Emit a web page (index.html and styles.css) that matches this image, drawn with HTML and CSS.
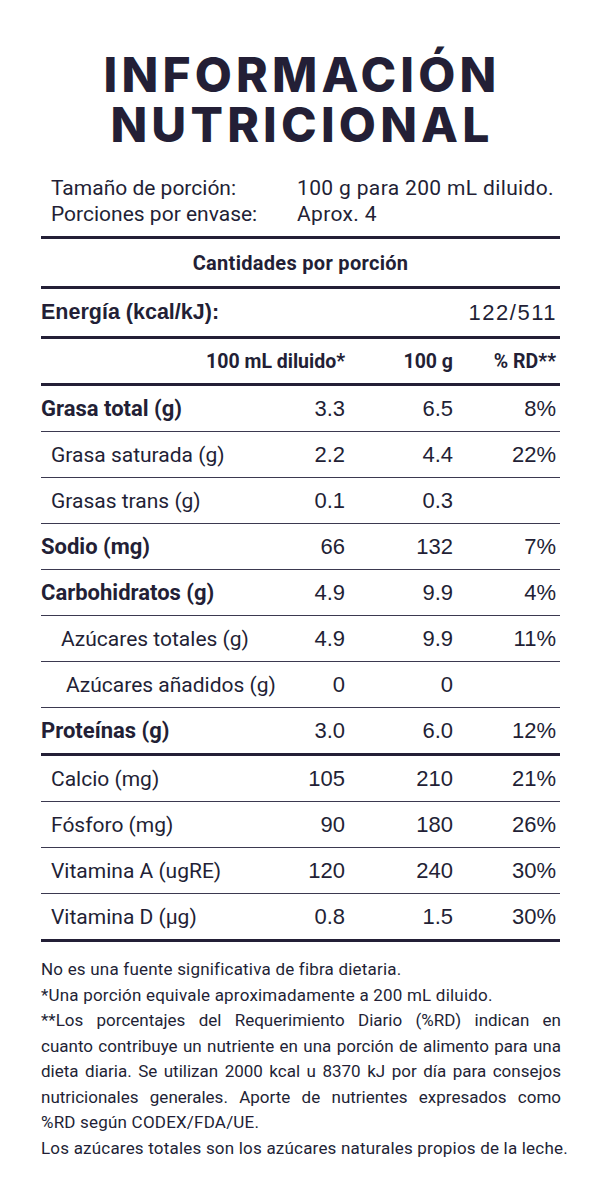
FILE: index.html
```html
<!DOCTYPE html>
<html lang="es">
<head>
<meta charset="utf-8">
<title>Información nutricional</title>
<link rel="stylesheet" href="styles.css">
</head>
<body>
<main class="label">
  <h1 class="title"><span class="title-line">INFORMACIÓN</span><span class="title-line">NUTRICIONAL</span></h1>

  <div class="serving">
    <span class="serving-key">Tamaño de porción:</span><span class="serving-val">100 g para 200 mL diluido.</span>
    <span class="serving-key">Porciones por envase:</span><span class="serving-val">Aprox. 4</span>
  </div>

  <div class="panel">
    <div class="band band-center">Cantidades por porción</div>
    <div class="band band-energy"><span class="energy-key">Energía (kcal/kJ):</span><span class="energy-val">122/511</span></div>

    <div class="row row-head">
      <span class="head-first">100 mL diluido*</span><span>100 g</span><span>% RD**</span>
    </div>

    <div class="group">
      <div class="row row-data"><span class="name strong">Grasa total (g)</span><span>3.3</span><span>6.5</span><span>8%</span></div>
      <div class="row row-data"><span class="name ind1">Grasa saturada (g)</span><span>2.2</span><span>4.4</span><span>22%</span></div>
      <div class="row row-data"><span class="name ind1">Grasas trans (g)</span><span>0.1</span><span>0.3</span><span></span></div>
      <div class="row row-data"><span class="name strong">Sodio (mg)</span><span>66</span><span>132</span><span>7%</span></div>
      <div class="row row-data"><span class="name strong">Carbohidratos (g)</span><span>4.9</span><span>9.9</span><span>4%</span></div>
      <div class="row row-data"><span class="name ind2">Azúcares totales (g)</span><span>4.9</span><span>9.9</span><span>11%</span></div>
      <div class="row row-data"><span class="name ind3">Azúcares añadidos (g)</span><span>0</span><span>0</span><span></span></div>
      <div class="row row-data"><span class="name strong">Proteínas (g)</span><span>3.0</span><span>6.0</span><span>12%</span></div>
    </div>

    <div class="group">
      <div class="row row-data"><span class="name ind1">Calcio (mg)</span><span>105</span><span>210</span><span>21%</span></div>
      <div class="row row-data"><span class="name ind1">Fósforo (mg)</span><span>90</span><span>180</span><span>26%</span></div>
      <div class="row row-data"><span class="name ind1">Vitamina A (ugRE)</span><span>120</span><span>240</span><span>30%</span></div>
      <div class="row row-data"><span class="name ind1">Vitamina D (µg)</span><span>0.8</span><span>1.5</span><span>30%</span></div>
    </div>
  </div>

  <div class="notes">
    <p class="loose">No es una fuente significativa de fibra dietaria.</p>
    <p class="loose">*Una porción equivale aproximadamente a 200 mL diluido.</p>
    <p class="justify">
      <span class="jline">**Los porcentajes del Requerimiento Diario (%RD) indican en</span>
      <span class="jline">cuanto contribuye un nutriente en una porción de alimento para una</span>
      <span class="jline">dieta diaria. Se utilizan 2000 kcal u 8370 kJ por día para consejos</span>
      <span class="jline">nutricionales generales. Aporte de nutrientes expresados como</span>
      <span class="lastline">%RD según CODEX/FDA/UE.</span>
    </p>
    <p class="loose nowrap">Los azúcares totales son los azúcares naturales propios de la leche.</p>
  </div>
</main>
</body>
</html>
```

FILE: styles.css
```css
html, body {
  margin: 0;
  padding: 0;
  background: #ffffff;
}

body {
  color: #231f36;
  font-family: Roboto, "Liberation Sans", sans-serif;
}

.label {
  width: 600px;
  padding-top: 50px;
}

.title {
  margin: 0;
  padding-left: 4px;
  font-family: Inter, "Liberation Sans", sans-serif;
  font-weight: 800;
  font-size: 48px;
  line-height: 50px;
  letter-spacing: 4.2px;
  text-align: center;
  color: #231f36;
}

.title-line {
  display: block;
}

.serving {
  margin: 25px 40px 9px 51px;
  display: grid;
  grid-template-columns: 246px 1fr;
  font-size: 21px;
  line-height: 26px;
  white-space: nowrap;
}

.serving-val {
  letter-spacing: 0.35px;
}

.panel {
  margin: 0 40px 0 41px;
  border-top: 3px solid #231f36;
}

.band {
  height: 47px;
  display: flex;
  align-items: center;
  border-bottom: 3px solid #231f36;
}

.band-center {
  justify-content: center;
  font-weight: 700;
  font-size: 20px;
  letter-spacing: 0.3px;
}

.band-energy {
  justify-content: space-between;
  padding-right: 3px;
}

.energy-key {
  font-family: "Liberation Sans", Arial, sans-serif;
  font-weight: 700;
  font-size: 21.5px;
}

.energy-val {
  font-family: "Liberation Sans", Arial, sans-serif;
  font-size: 22px;
  letter-spacing: 1.5px;
}

.row {
  display: grid;
  grid-template-columns: minmax(0, 1fr) 95px 108px 103px;
  align-items: center;
  height: 45px;
  padding-right: 4px;
  font-size: 21px;
  white-space: nowrap;
  border-bottom: 1px solid #3b3950;
}

.row > span {
  text-align: right;
}

.row-data > span {
  font-family: "Liberation Sans", Arial, sans-serif;
  font-size: 22px;
}

.row-data > span.name {
  font-family: Roboto, "Liberation Sans", sans-serif;
  font-size: 21px;
  text-align: left;
}

.row-data > span.strong {
  font-size: 22px;
  font-weight: 700;
}

.row-head {
  height: 44px;
  font-weight: 700;
  font-size: 19.5px;
  border-bottom: 3px solid #231f36;
}

.head-first {
  grid-column: 1 / 3;
}

.group .row:last-child {
  border-bottom: 3px solid #231f36;
}

.ind1 { padding-left: 10px; }
.ind2 { padding-left: 20px; }
.ind3 { padding-left: 25px; }

.notes {
  margin: 15px 39px 0 41px;
  font-size: 17px;
  line-height: 25.5px;
}

.notes p {
  margin: 0;
}

.loose {
  letter-spacing: 0.2px;
}

.jline {
  display: block;
  text-align: justify;
  text-align-last: justify;
  white-space: nowrap;
}

.lastline {
  display: block;
  letter-spacing: 0.2px;
}

.nowrap {
  white-space: nowrap;
}
```
